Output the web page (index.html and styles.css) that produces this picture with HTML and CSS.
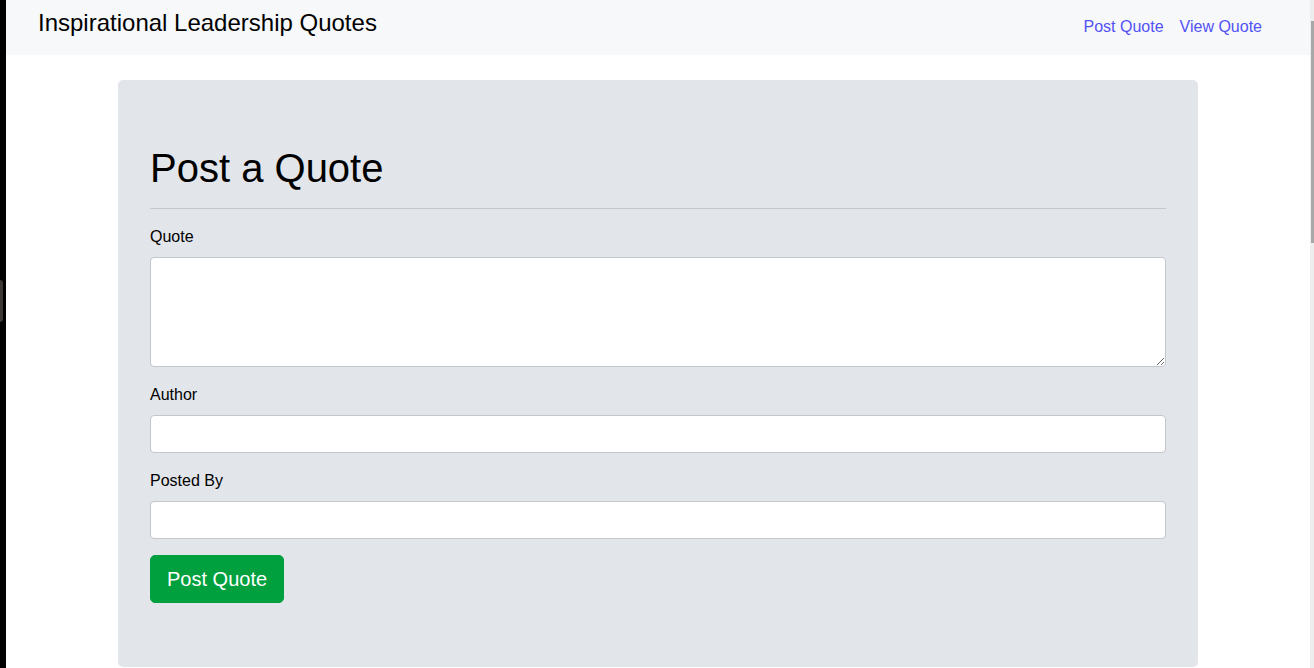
FILE: index.html
```html
<!DOCTYPE html>
<html lang="en">
<head>
<meta charset="utf-8">
<title>Inspirational Leadership Quotes</title>
<link rel="stylesheet" href="styles.css">
</head>
<body>
<div class="edge"><span class="edge-tab"></span></div>
<div class="page">
  <nav class="navbar">
    <a class="brand" href="#">Inspirational Leadership Quotes</a>
    <div class="nav-links">
      <a class="nav-link" href="#">Post Quote</a>
      <a class="nav-link" href="#">View Quote</a>
    </div>
  </nav>
  <main class="container">
    <section class="jumbotron">
      <h1 class="title">Post a Quote</h1>
      <hr class="divider">
      <form class="form">
        <div class="form-group">
          <label class="label" for="quote">Quote</label>
          <textarea class="control textarea" id="quote" rows="4"></textarea>
        </div>
        <div class="form-group">
          <label class="label" for="author">Author</label>
          <input class="control" id="author" type="text">
        </div>
        <div class="form-group">
          <label class="label" for="posted">Posted By</label>
          <input class="control" id="posted" type="text">
        </div>
        <button class="btn" type="button">Post Quote</button>
      </form>
    </section>
  </main>
</div>
<div class="scrollbar"><span class="thumb"></span></div>
</body>
</html>
```
FILE: styles.css
```css
* { box-sizing: border-box; }

html, body {
  margin: 0;
  height: 100%;
}

body {
  display: flex;
  overflow: hidden;
  background: #fff;
  font-family: "Liberation Sans", Arial, sans-serif;
  font-size: 16px;
  line-height: 1.5;
  color: #212529;
}

.edge {
  position: relative;
  width: 6px;
  flex: none;
  background: #000;
}

.edge-tab {
  position: absolute;
  left: 0;
  top: 280px;
  width: 3px;
  height: 42px;
  background: #3b3836;
  border-radius: 0 3px 3px 0;
}

.page {
  flex: 1;
  min-width: 0;
}

.scrollbar {
  position: relative;
  width: 4px;
  flex: none;
  background: #ededed;
}

.thumb {
  position: absolute;
  left: 1px;
  right: 0;
  top: 21px;
  height: 222px;
  background: #a8a8a8;
}

.navbar {
  display: flex;
  align-items: flex-start;
  justify-content: space-between;
  height: 55px;
  padding: 5px 40px 0 32px;
  background: #f7f8fa;
}

.brand {
  font-size: 24px;
  line-height: 36px;
  color: #000;
  text-decoration: none;
}

.nav-links {
  display: flex;
  margin-top: 10px;
}

.nav-link {
  padding: 0 8px;
  color: #5252f5;
  text-decoration: none;
}

.container {
  max-width: 1080px;
  margin: 25px auto 0;
}

.jumbotron {
  padding: 64px 32px;
  background: #e2e5ea;
  border-radius: 5px;
}

.title {
  margin: 0;
  font-size: 40px;
  font-weight: 400;
  line-height: 48px;
  color: #000;
}

.divider {
  margin: 16px 0;
  border: 0;
  border-top: 1px solid #c5c7cb;
}

.form {
  margin: 0;
}

.form-group {
  margin-bottom: 16px;
}

.label {
  display: block;
  margin-bottom: 8px;
  color: #000;
}

.control {
  display: block;
  width: 100%;
  height: 38px;
  padding: 6px 12px;
  font: inherit;
  color: #495057;
  background: #fff;
  border: 1px solid #c3c6cb;
  border-radius: 4px;
}

.textarea {
  height: 110px;
  resize: vertical;
}

.btn {
  display: block;
  padding: 8px 16px;
  font-family: inherit;
  font-size: 20px;
  line-height: 30px;
  color: #fff;
  background: #00a03f;
  border: 1px solid #00a03f;
  border-radius: 5px;
}
```
